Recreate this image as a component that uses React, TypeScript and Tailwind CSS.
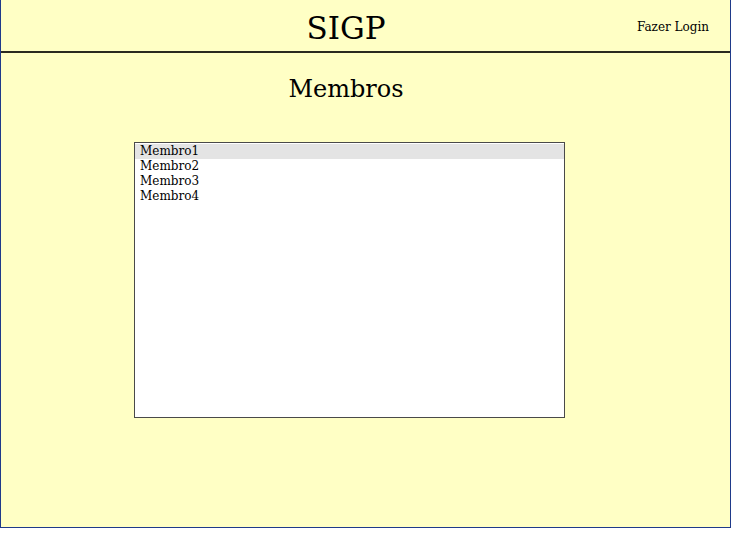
export default function App() {
  const members = ["Membro1", "Membro2", "Membro3", "Membro4"];
  return (
    <div className="w-[731px] h-[533px] bg-white" style={{ fontFamily: '"DejaVu Serif", serif' }}>
      <div className="h-[528px] bg-[#ffffc5] border-x border-b border-[#1f3a8a] flex flex-col">
        <header className="h-[53px] border-b-2 border-[#2a2a20] flex items-center relative">
          <h1 className="w-[690px] text-center text-[31px] leading-none text-black pt-[5px]">SIGP</h1>
          <a className="absolute right-[21px] top-[20px] text-[12px] leading-[15px] text-black">Fazer Login</a>
        </header>
        <h2 className="w-[690px] text-center text-[24px] leading-none text-black mt-[24px]">Membros</h2>
        <div className="ml-[133px] mt-[41px] w-[431px] h-[276px] bg-white border border-[#4a4a4a]">
          <ul className="pt-[1px]">
            {members.map((m, i) => (
              <li
                key={m}
                className={
                  "h-[15px] pl-[5px] text-[12px] leading-[15px] text-black " + (i === 0 ? "bg-[#e4e4e4]" : "")
                }
              >
                {m}
              </li>
            ))}
          </ul>
        </div>
      </div>
    </div>
  );
}
